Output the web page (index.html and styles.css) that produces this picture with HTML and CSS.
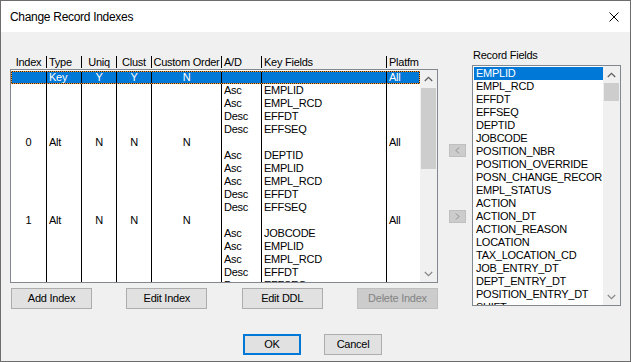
FILE: index.html
```html
<!DOCTYPE html>
<html>
<head>
<meta charset="utf-8">
<link rel="stylesheet" href="styles.css">
</head>
<body>
<div class="window">
  <div class="titlebar">
    <span class="title">Change Record Indexes</span>
    <svg class="close" width="10" height="10" viewBox="0 0 10 10"><path d="M0.5 0.5L9.5 9.5M9.5 0.5L0.5 9.5" stroke="#000" stroke-width="1" fill="none"/></svg>
  </div>
  <div class="main">
    <div class="left">
      <div class="grid hdr">
        <div class="c ctr">Index</div>
        <div class="c hs">Type</div>
        <div class="c hs ctr">Uniq</div>
        <div class="c hs ctr">Clust</div>
        <div class="c hs ctr">Custom Order</div>
        <div class="c hs">A/D</div>
        <div class="c hs">Key Fields</div>
        <div class="c hs">Platfm</div>
      </div>
      <div class="listbox lb-index">
        <div class="rows">
          <div class="grid row sel"><div class="c ctr"></div><div class="c s">Key</div><div class="c s ctr">Y</div><div class="c s ctr">Y</div><div class="c s ctr">N</div><div class="c s"></div><div class="c s"></div><div class="c s">All</div></div>
          <div class="grid row"><div class="c ctr"></div><div class="c s"></div><div class="c s ctr"></div><div class="c s ctr"></div><div class="c s ctr"></div><div class="c s">Asc</div><div class="c s">EMPLID</div><div class="c s"></div></div>
          <div class="grid row"><div class="c ctr"></div><div class="c s"></div><div class="c s ctr"></div><div class="c s ctr"></div><div class="c s ctr"></div><div class="c s">Asc</div><div class="c s">EMPL_RCD</div><div class="c s"></div></div>
          <div class="grid row"><div class="c ctr"></div><div class="c s"></div><div class="c s ctr"></div><div class="c s ctr"></div><div class="c s ctr"></div><div class="c s">Desc</div><div class="c s">EFFDT</div><div class="c s"></div></div>
          <div class="grid row"><div class="c ctr"></div><div class="c s"></div><div class="c s ctr"></div><div class="c s ctr"></div><div class="c s ctr"></div><div class="c s">Desc</div><div class="c s">EFFSEQ</div><div class="c s"></div></div>
          <div class="grid row"><div class="c ctr">0</div><div class="c s">Alt</div><div class="c s ctr">N</div><div class="c s ctr">N</div><div class="c s ctr">N</div><div class="c s"></div><div class="c s"></div><div class="c s">All</div></div>
          <div class="grid row"><div class="c ctr"></div><div class="c s"></div><div class="c s ctr"></div><div class="c s ctr"></div><div class="c s ctr"></div><div class="c s">Asc</div><div class="c s">DEPTID</div><div class="c s"></div></div>
          <div class="grid row"><div class="c ctr"></div><div class="c s"></div><div class="c s ctr"></div><div class="c s ctr"></div><div class="c s ctr"></div><div class="c s">Asc</div><div class="c s">EMPLID</div><div class="c s"></div></div>
          <div class="grid row"><div class="c ctr"></div><div class="c s"></div><div class="c s ctr"></div><div class="c s ctr"></div><div class="c s ctr"></div><div class="c s">Asc</div><div class="c s">EMPL_RCD</div><div class="c s"></div></div>
          <div class="grid row"><div class="c ctr"></div><div class="c s"></div><div class="c s ctr"></div><div class="c s ctr"></div><div class="c s ctr"></div><div class="c s">Desc</div><div class="c s">EFFDT</div><div class="c s"></div></div>
          <div class="grid row"><div class="c ctr"></div><div class="c s"></div><div class="c s ctr"></div><div class="c s ctr"></div><div class="c s ctr"></div><div class="c s">Desc</div><div class="c s">EFFSEQ</div><div class="c s"></div></div>
          <div class="grid row"><div class="c ctr">1</div><div class="c s">Alt</div><div class="c s ctr">N</div><div class="c s ctr">N</div><div class="c s ctr">N</div><div class="c s"></div><div class="c s"></div><div class="c s">All</div></div>
          <div class="grid row"><div class="c ctr"></div><div class="c s"></div><div class="c s ctr"></div><div class="c s ctr"></div><div class="c s ctr"></div><div class="c s">Asc</div><div class="c s">JOBCODE</div><div class="c s"></div></div>
          <div class="grid row"><div class="c ctr"></div><div class="c s"></div><div class="c s ctr"></div><div class="c s ctr"></div><div class="c s ctr"></div><div class="c s">Asc</div><div class="c s">EMPLID</div><div class="c s"></div></div>
          <div class="grid row"><div class="c ctr"></div><div class="c s"></div><div class="c s ctr"></div><div class="c s ctr"></div><div class="c s ctr"></div><div class="c s">Asc</div><div class="c s">EMPL_RCD</div><div class="c s"></div></div>
          <div class="grid row"><div class="c ctr"></div><div class="c s"></div><div class="c s ctr"></div><div class="c s ctr"></div><div class="c s ctr"></div><div class="c s">Desc</div><div class="c s">EFFDT</div><div class="c s"></div></div>
          <div class="grid row"><div class="c ctr"></div><div class="c s"></div><div class="c s ctr"></div><div class="c s ctr"></div><div class="c s ctr"></div><div class="c s">Desc</div><div class="c s">EFFSEQ</div><div class="c s"></div></div>
        </div>
        <div class="vscroll">
          <div class="sb-btn"><svg width="9" height="6" viewBox="0 0 9 6"><polyline points="0.8,5 4.5,1.3 8.2,5" fill="none" stroke="#606060" stroke-width="1.3"/></svg></div>
          <div class="thumb thumb-index"></div>
          <div class="track"></div>
          <div class="sb-btn"><svg width="9" height="6" viewBox="0 0 9 6"><polyline points="0.8,1 4.5,4.7 8.2,1" fill="none" stroke="#8a8a8a" stroke-width="1.3"/></svg></div>
        </div>
      </div>
      <div class="btnrow">
        <div class="btn">Add Index</div>
        <div class="btn">Edit Index</div>
        <div class="btn">Edit DDL</div>
        <div class="btn disabled">Delete Index</div>
      </div>
    </div>
    <div class="mid">
      <div class="arrowbtn"><svg width="5" height="7" viewBox="0 0 5 7"><polyline points="4,0.5 1,3.5 4,6.5" fill="none" stroke="#8a8a8a" stroke-width="1"/></svg></div>
      <div class="arrowbtn"><svg width="5" height="7" viewBox="0 0 5 7"><polyline points="1,0.5 4,3.5 1,6.5" fill="none" stroke="#8a8a8a" stroke-width="1"/></svg></div>
    </div>
    <div class="right">
      <div class="rlabel">Record Fields</div>
      <div class="listbox lb-fields">
        <div class="items">
          <div class="item sel">EMPLID</div>
          <div class="item">EMPL_RCD</div>
          <div class="item">EFFDT</div>
          <div class="item">EFFSEQ</div>
          <div class="item">DEPTID</div>
          <div class="item">JOBCODE</div>
          <div class="item">POSITION_NBR</div>
          <div class="item">POSITION_OVERRIDE</div>
          <div class="item">POSN_CHANGE_RECOR</div>
          <div class="item">EMPL_STATUS</div>
          <div class="item">ACTION</div>
          <div class="item">ACTION_DT</div>
          <div class="item">ACTION_REASON</div>
          <div class="item">LOCATION</div>
          <div class="item">TAX_LOCATION_CD</div>
          <div class="item">JOB_ENTRY_DT</div>
          <div class="item">DEPT_ENTRY_DT</div>
          <div class="item">POSITION_ENTRY_DT</div>
          <div class="item">SHIFT</div>
        </div>
        <div class="vscroll">
          <div class="sb-btn"><svg width="9" height="6" viewBox="0 0 9 6"><polyline points="0.8,5 4.5,1.3 8.2,5" fill="none" stroke="#606060" stroke-width="1.3"/></svg></div>
          <div class="thumb thumb-fields"></div>
          <div class="track"></div>
          <div class="sb-btn"><svg width="9" height="6" viewBox="0 0 9 6"><polyline points="0.8,1 4.5,4.7 8.2,1" fill="none" stroke="#8a8a8a" stroke-width="1.3"/></svg></div>
        </div>
      </div>
    </div>
  </div>
  <div class="footer">
    <div class="btn ok">OK</div>
    <div class="btn cancel">Cancel</div>
  </div>
</div>
</body>
</html>
```

FILE: styles.css
```css
* { box-sizing: border-box; }
html, body { margin: 0; padding: 0; background: #f0f0f0; }
body {
  font-family: "Liberation Sans", Arial, sans-serif;
  font-size: 11px;
  letter-spacing: -0.25px;
  color: #000;
}
.window {
  width: 631px;
  height: 362px;
  border: 1px solid #6d6d6d;
  background: #f0f0f0;
  display: flex;
  flex-direction: column;
  overflow: hidden;
}
.titlebar {
  flex: none;
  height: 31px;
  background: #fff;
  display: flex;
  align-items: center;
  padding: 0 11px 0 9px;
}
.title {
  font-size: 12px;
  letter-spacing: -0.3px;
  color: #000;
}
.close { margin-left: auto; display: block; }

.main {
  flex: none;
  height: 277px;
  display: flex;
  padding-left: 9px;
}
.left {
  width: 428px;
  flex: none;
  padding-top: 24px;
  display: flex;
  flex-direction: column;
}
.grid {
  display: grid;
  grid-template-columns: 35px 35px 35px 35px 70px 40px 125px 1fr;
}
.hdr {
  height: 12px;
  line-height: 12px;
  margin: 0 0 1px 1px;
}
.c {
  white-space: nowrap;
  overflow: hidden;
  padding-left: 2px;
}
.c.ctr { text-align: center; padding-left: 0; }
.hs { border-left: 1px solid #000; }
.s { border-left: 1px solid #000; }

.listbox {
  border: 1px solid #828790;
  background: #fff;
  display: flex;
  overflow: hidden;
}
.lb-index { height: 214px; flex: none; }
.rows {
  flex: 1;
  padding-top: 1px;
  overflow: hidden;
}
.row { height: 13px; line-height: 13px; }
.row.sel {
  background: #0078d7;
  color: #fff;
  box-shadow: inset 0 0 0 1px #3a2a10;
  outline: 1px dotted #ff9a3a;
  outline-offset: -1px;
}

.vscroll {
  width: 17px;
  flex: none;
  background: #f0f0f0;
  display: flex;
  flex-direction: column;
}
.sb-btn {
  height: 17px;
  flex: none;
  display: flex;
  align-items: center;
  justify-content: center;
}
.sb-btn svg { display: block; }
.thumb {
  flex: none;
  background: #cdcdcd;
  margin: 1px 1px 0 1px;
}
.thumb-index { height: 81px; }
.thumb-fields { height: 18px; margin-top: 0; }
.track { flex: 1; }

.btnrow {
  margin-top: 5px;
  padding-left: 1px;
  display: flex;
  justify-content: space-between;
}
.btn {
  width: 81px;
  height: 21px;
  line-height: 19px;
  text-align: center;
  background: #e1e1e1;
  border: 1px solid #adadad;
  white-space: nowrap;
}
.btn.disabled {
  background: #cccccc;
  border-color: #bfbfbf;
  color: #838383;
}

.mid {
  width: 34px;
  flex: none;
  padding: 112px 0 0 11px;
  display: flex;
  flex-direction: column;
  gap: 53px;
}
.arrowbtn {
  width: 17px;
  height: 13px;
  background: #cccccc;
  border: 1px solid #bfbfbf;
  display: flex;
  align-items: center;
  justify-content: center;
}
.arrowbtn svg { display: block; }

.right {
  width: 149px;
  flex: none;
  padding-top: 17px;
  display: flex;
  flex-direction: column;
}
.rlabel {
  height: 13px;
  line-height: 13px;
  padding-left: 1px;
  margin-bottom: 3px;
}
.lb-fields { height: 241px; flex: none; }
.items {
  flex: 1;
  padding: 1px 0 0 1px;
  overflow: hidden;
}
.item {
  height: 13px;
  line-height: 13px;
  padding-left: 2px;
  white-space: nowrap;
}
.item.sel { background: #0078d7; color: #fff; }

.footer {
  flex: none;
  padding: 25px 0 0 242px;
  display: flex;
  gap: 23px;
}
.btn.ok, .btn.cancel { width: 58px; }
.btn.ok {
  border: 2px solid #0078d7;
  line-height: 17px;
}
```
